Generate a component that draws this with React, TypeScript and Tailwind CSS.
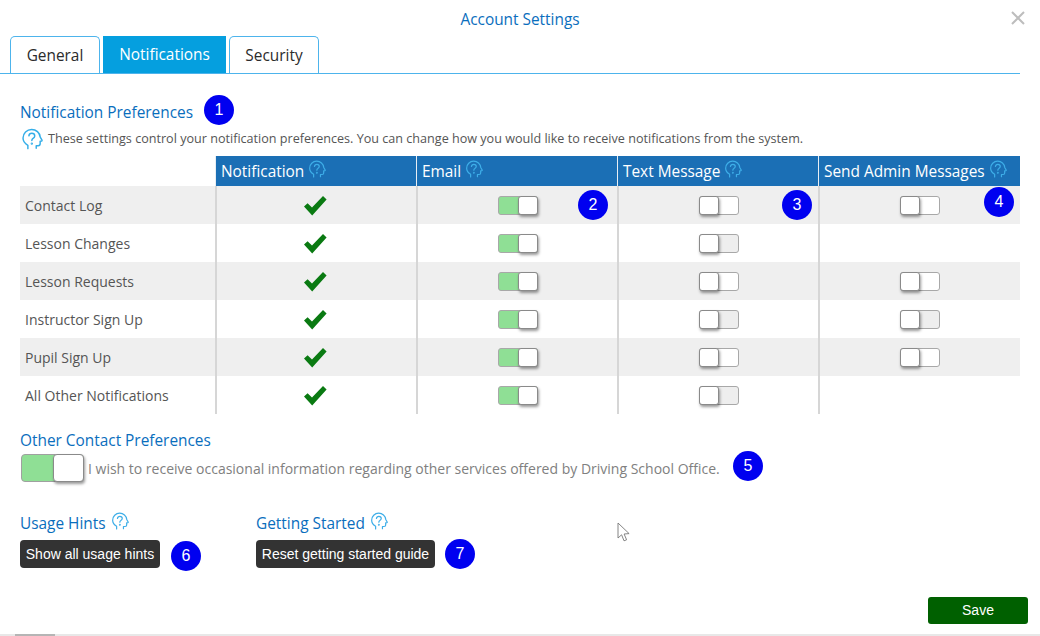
import React from "react";

function Hint({ className }: { className: string }) {
  return (
    <svg viewBox="0 0 24 24" fill="none" stroke="currentColor" strokeWidth="1.6" strokeLinecap="round" strokeLinejoin="round" className={className}>
      <path d="M7.5 22.5v-3.6C4.6 17.2 2.2 14.6 2.2 10.9 2.2 5.6 6.4 1.6 11.6 1.6c4.9 0 8.9 3.5 9.4 8.3l1.9 3.4c.2.4 0 .7-.4.8l-1.6.3v2.9c0 1.2-.9 2-2.1 2h-2.2v2.9" />
      <path d="M8.6 8.6c.2-1.8 1.5-2.9 3.2-2.9 1.8 0 3.2 1.2 3.2 2.9 0 1.4-.9 2.1-1.9 2.8-.9.6-1.3 1.1-1.3 2.2" />
      <circle cx="11.8" cy="17" r="0.5" />
    </svg>
  );
}

function Check() {
  return (
    <svg viewBox="0 0 24 21" className="w-6 h-[21px] -ml-[4px]">
      <path fill="#0a7a12" d="M1 11.5 L4.6 8.2 L9 12.6 L20 1 L23.6 4.4 L9.2 20.6 Z" />
    </svg>
  );
}

function Toggle({ on, grey }: { on?: boolean; grey?: boolean }) {
  return (
    <div className={`flex w-10 h-[19px] rounded-[3px] border border-[#a8a8a8] ${on ? "bg-[#8fdf95] justify-end" : grey ? "bg-[#eeeeee]" : "bg-white"}`}>
      <div className="w-5 h-[19px] -mt-px -mr-px -ml-px bg-white rounded-[3px] border border-[#8a8a8a] shadow-[1px_2px_3px_rgba(0,0,0,0.4)]" />
    </div>
  );
}

function Badge({ n, className }: { n: number; className: string }) {
  return (
    <div className={`absolute w-[30px] h-[30px] rounded-full bg-[#0000f0] text-white flex items-center justify-center text-[16px] ${className}`} style={{ fontFamily: '"Liberation Sans", sans-serif' }}>
      {n}
    </div>
  );
}

const rows: [string, boolean, boolean, boolean | null][] = [
  ["Contact Log", true, false, false],
  ["Lesson Changes", true, true, null],
  ["Lesson Requests", true, false, false],
  ["Instructor Sign Up", true, true, true],
  ["Pupil Sign Up", true, false, false],
  ["All Other Notifications", true, true, null],
];

export default function App() {
  return (
    <div className="relative w-[1040px] h-[636px] bg-white overflow-hidden flex flex-col font-['Open_Sans',sans-serif]">
      <div className="relative h-9 flex items-center justify-center text-[15.4px] text-[#0a6ebd] pt-[4px]">
        Account Settings
        <svg viewBox="0 0 14 14" className="absolute left-[1011px] top-[11px] w-[14px] h-[14px]" stroke="#bdbdbd" strokeWidth="2">
          <path d="M1 1 13 13M13 1 1 13" />
        </svg>
      </div>

      <div className="w-[1020px] h-[38px] flex gap-[3px] pl-[10px] border-b-[1.5px] border-[#4db4ec] text-[15.4px] shrink-0">
        <div className="w-[90px] h-[37px] pt-px flex items-center justify-center rounded-t-[5px] border-[1.5px] border-b-0 border-[#4db4ec] text-[#2b2b2b] bg-white">General</div>
        <div className="w-[123px] h-[37px] pt-px flex items-center justify-center bg-[#059fdf] text-white">Notifications</div>
        <div className="w-[90px] h-[37px] pt-px flex items-center justify-center rounded-t-[5px] border-[1.5px] border-b-0 border-[#4db4ec] text-[#2b2b2b] bg-white">Security</div>
      </div>

      <div className="pl-5 w-[1020px] box-content flex flex-col">
        <div className="text-[15.4px] leading-5 text-[#0a6ebd] mt-[29px]">Notification Preferences</div>
        <div className="flex items-center gap-[5px] mt-[4px] h-6">
          <Hint className="w-[22px] h-[22px] text-[#35aee8] ml-px" />
          <span className="text-[12.6px] text-[#555555]">These settings control your notification preferences. You can change how you would like to receive notifications from the system.</span>
        </div>

        <div className="grid grid-cols-[195px_201px_201px_201px_202px] w-[1000px] mt-[5px]">
          <div className="h-[30px]" />
          {["Notification", "Email", "Text Message", "Send Admin Messages"].map((h) => (
            <div key={h} className="h-[30px] pt-[2px] bg-[#1b6fb5] border-l-[1px] border-[#e8eef4] text-white text-[15.4px] flex items-center pl-[5px] gap-[4px]">
              {h}
              <Hint className="w-[18px] h-[18px] text-[#3eaee8] -mt-[6px]" />
            </div>
          ))}
          {rows.map(([name, email, greyText, admin], i) => {
            const bg = i % 2 === 0 ? "bg-[#efefef]" : "bg-white";
            const cell = `h-[38px] ${bg} border-l-[2px] border-[#d6d6d6] flex items-center justify-center`;
            return (
              <React.Fragment key={name}>
                <div className={`h-[38px] ${bg} pl-[5px] flex items-center text-[14px] text-[#555555]`}>{name}</div>
                <div className={cell}><Check /></div>
                <div className={cell}><Toggle on={email} /></div>
                <div className={cell}><Toggle grey={greyText} /></div>
                <div className={cell}>{admin !== null && <Toggle grey={admin} />}</div>
              </React.Fragment>
            );
          })}
        </div>

        <div className="text-[15.4px] leading-5 text-[#0a6ebd] mt-[17px]">Other Contact Preferences</div>
        <div className="flex items-center gap-[4px] mt-[3px]">
          <div className="ml-px flex justify-end w-[63px] h-[28px] rounded-[4px] border border-[#a0a0a0] bg-[#8fdf95]">
            <div className="w-[31px] h-[28px] -m-px bg-white rounded-[4px] border border-[#8a8a8a] shadow-[1px_2px_3px_rgba(0,0,0,0.4)]" />
          </div>
          <span className="text-[14px] text-[#808080]">I wish to receive occasional information regarding other services offered by Driving School Office.</span>
        </div>

        <div className="flex mt-[32px]">
          <div className="w-[236px]">
            <div className="flex gap-[5px] text-[15.4px] leading-5 text-[#0a6ebd]">
              Usage Hints
              <Hint className="w-[18px] h-[18px] text-[#3eaee8] -mt-[2px]" />
            </div>
            <button className="block mt-[6px] w-[140px] h-7 rounded-[4px] bg-[#333333] text-white text-[14px] font-['Liberation_Sans',sans-serif]">Show all usage hints</button>
          </div>
          <div>
            <div className="flex gap-[5px] text-[15.4px] leading-5 text-[#0a6ebd]">
              Getting Started
              <Hint className="w-[18px] h-[18px] text-[#3eaee8] -mt-[2px]" />
            </div>
            <button className="block mt-[6px] w-[179px] h-7 rounded-[4px] bg-[#333333] text-white text-[14px] font-['Liberation_Sans',sans-serif]">Reset getting started guide</button>
          </div>
        </div>
      </div>

      <div className="flex justify-end pr-3 mt-[29px]">
        <button className="w-[100px] h-[27px] rounded-[3px] bg-[#006000] text-white text-[14px] font-['Liberation_Sans',sans-serif]">Save</button>
      </div>

      <div className="absolute left-0 right-0 bottom-0 h-[2px] bg-[#e8e8e8]">
        <div className="ml-[15px] w-[40px] h-[2px] bg-[#b5b5b5]" />
      </div>

      <Badge n={1} className="left-[204px] top-[95px]" />
      <Badge n={2} className="left-[578px] top-[190px]" />
      <Badge n={3} className="left-[782px] top-[190px]" />
      <Badge n={4} className="left-[984px] top-[187px]" />
      <Badge n={5} className="left-[733px] top-[451px]" />
      <Badge n={6} className="left-[171px] top-[541px]" />
      <Badge n={7} className="left-[445px] top-[539px]" />

      <svg viewBox="0 0 14 20" className="absolute left-[617px] top-[522px] w-[14px] h-5">
        <path d="M1 1v15l3.6-3.2 2.4 6 2.6-1-2.5-5.8 5-.4Z" fill="#fff" stroke="#777" strokeWidth="0.9" />
      </svg>
    </div>
  );
}
